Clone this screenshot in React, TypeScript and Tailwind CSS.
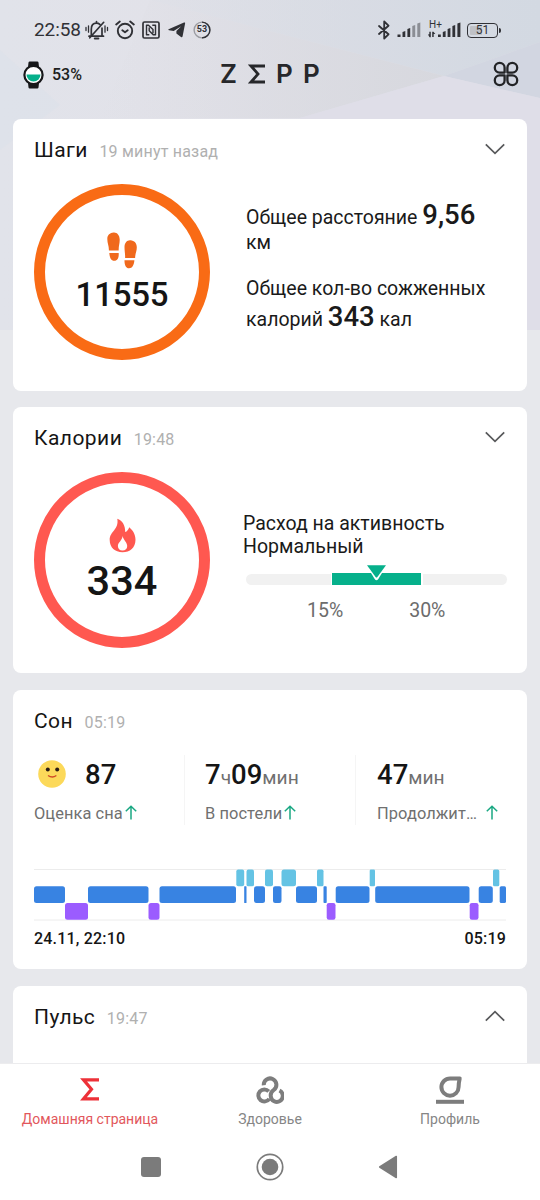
import type { ReactNode } from 'react';

type Stage = 'awake' | 'light' | 'deep';

// [stage, start, end] along the 472 unit wide night
const sleepStages: [Stage, number, number][] = [
    ['light', 0, 31],
    ['deep', 31, 54],
    ['light', 54, 114.5],
    ['deep', 114.5, 125.5],
    ['light', 125.5, 202],
    ['awake', 202.3, 210.2],
    ['light', 210.2, 212.5],
    ['awake', 212.5, 220],
    ['light', 220, 231],
    ['awake', 231, 239],
    ['light', 239, 247.5],
    ['awake', 247.5, 262],
    ['light', 262, 283],
    ['awake', 283, 289.5],
    ['light', 289.5, 292.7],
    ['deep', 292.7, 301.5],
    ['light', 301.7, 335.5],
    ['awake', 335.7, 341],
    ['light', 341.2, 435.5],
    ['deep', 435.7, 444.5],
    ['light', 444.7, 458.8],
    ['awake', 459, 465.3],
    ['light', 465.7, 472],
];

const stageColor = { awake: '#64c3e4', light: '#3883e2', deep: '#9b5cff' };
const stageTop = { awake: 0.5, light: 17.2, deep: 34 };

function StatusBar() {
    return (
        <div className="flex items-center h-[60px] pl-[34px] text-[#303136]">
            <span className="w-[51px] text-[19px] tracking-[-0.1px]">22:58</span>
            {/* Muted bell */}
            <svg width="24" height="20" viewBox="0 0 24 20" fill="none" stroke="currentColor" strokeWidth="1.7" strokeLinecap="round">
                <path d="M4 16.2h14.5M6.3 15.5V9.2c0-3.6 2-6 5.2-6 1.3 0 2.4.4 3.3 1.2M17 8.2v7.3M11.5 3V1.5M18.7 2.3 4.8 17.8" />
                <path d="M9.8 18.6h3.6" strokeWidth="2" />
                <path d="M1 7.5v3M3.5 5.8v6.4M22.5 7.5v3M20 5.8v6.4" strokeWidth="1.3" />
            </svg>
            {/* Alarm */}
            <svg className="ml-[6px]" width="20" height="20" viewBox="0 0 20 20" fill="none" stroke="currentColor" strokeWidth="1.9" strokeLinecap="round" strokeLinejoin="round">
                <circle cx="10" cy="11" r="7.2" />
                <path d="M1.2 4.5 4.8 1.5M18.8 4.5 15.2 1.5" />
                <path d="m7.3 10.2 2.7 2 2.7-2" />
            </svg>
            {/* NFC */}
            <svg className="ml-[7px]" width="18" height="18" viewBox="0 0 18 18" fill="none" stroke="currentColor" strokeWidth="1.7" strokeLinejoin="round">
                <rect x="1" y="1" width="16" height="16" rx="1.5" />
                <path d="M7.3 13.8H4.5V4.3h2l4.5 4.2v3.8M10.300 4.300h3.200v9.500h-2.300L7.200 9.800V6.500" strokeWidth="1.4" />
            </svg>
            {/* Telegram */}
            <svg className="ml-[8px]" width="18" height="16" viewBox="0 0 18 16" fill="currentColor">
                <path d="M.6 7.2 16 .5c.8-.3 1.3.1 1.1 1l-2.5 12.8c-.2.9-.9 1.1-1.6.6l-4.6-3.4V8.9l4.8-4.7-7.5 4.9L1 8.3c-.8-.3-.9-.8-.4-1.1Z" />
            </svg>
            {/* Power saver circle */}
            <div className="relative ml-[7px] size-[18px]">
                <svg width="18" height="18" viewBox="0 0 18 18" fill="none" strokeWidth="1.4">
                    <circle cx="9" cy="9" r="7.9" stroke="#9b9ca2" />
                    <path d="M9 1.1a7.9 7.9 0 0 1 0 15.8" stroke="#303136" />
                </svg>
                <span className="absolute inset-0 flex items-center justify-center text-[9px] font-bold">53</span>
            </div>

            {/* Bluetooth */}
            <svg className="ml-[167px]" width="12" height="20" viewBox="0 0 12 20" fill="none" stroke="currentColor" strokeWidth="1.8" strokeLinejoin="round" strokeLinecap="round">
                <path d="m1 6 9.5 8.3-4.3 4.2v-17l4.3 4.2L1 14" />
            </svg>
            <svg className="ml-[7px]" width="24" height="16" viewBox="0 0 24 16" fill="currentColor">
                <path d="M.5 12.5h3V15h-3ZM5.5 10l2.8-1v6H5.500ZM10.4 7l2.8-1v9h-2.8Z" />
                <path d="m15.3 4 2.9-1v12h-2.9ZM20.3 1.5l3-1V15h-3Z" opacity=".45" />
            </svg>
            <div className="relative ml-[7px] w-[33px] h-[20px]">
                <span className="absolute left-[1px] top-0 text-[10px] leading-[10px]">H+</span>
                <svg className="absolute left-0 top-[2px]" width="33" height="16" viewBox="0 0 33 16" fill="currentColor">
                    <path d="m0 12.5 1.3-.3V9.8h1.5v5.4H1.500ZM4.2 9.8h1.300L7.300 12H5.700v3H4.200ZM10 12.500h2.800V15H10ZM14.800 10l2.800-1v6h-2.800ZM19.600 7l2.800-1v9h-2.800ZM24.400 4l2.800-1v12h-2.800ZM29.400 1.500l3-1V15h-3Z" />
                </svg>
            </div>
            {/* Battery */}
            <div className="ml-[6px] flex items-center">
                <div className="w-[31px] h-[15px] rounded-[4px] border-[1.5px] border-[#303136] p-[2px]">
                    <div className="h-full flex items-center justify-center bg-linear-to-r from-[#bfc1c6] from-50% to-transparent to-50% rounded-[1px] text-[12px] leading-none">51</div>
                </div>
                <div className="ml-[1px] w-[2px] h-[5px] rounded-r-sm bg-[#303136]"></div>
            </div>
        </div>
    );
}

function Header() {
    return (
        <div className="flex items-center h-[30px] pl-[23px]">
            <svg className="-mt-[1px]" width="21" height="28" viewBox="0 0 21 28">
                <path d="M5.5 1.5Q5.7.5 6.7.5h7.6q1 0 1.2 1L16 6H5ZM5.500 26.500q.2 1 1.200 1h7.600q1 0 1.200-1L16 22H5Z" fill="#17181a" />
                <circle cx="10.5" cy="14" r="9.1" fill="#fff" stroke="#17181a" strokeWidth="2.2" />
                <path d="M3.5 13.500h14a7 7 0 0 1-14 0Z" fill="#06b08b" />
            </svg>
            <span className="ml-[8px] w-[168px] text-[16px] font-medium text-[#1d1e20]">53%</span>
            <div className="flex w-[103px] -mt-[2px] font-['Inter'] text-[26px] leading-[30px] font-semibold text-[#26272a]">
                <span className="w-[28px]">Z</span>
                <svg className="mt-[5px] mr-[10px]" width="18" height="20" viewBox="0 0 18 20" fill="none" stroke="currentColor" strokeWidth="2.8">
                    <path d="M17 2H3L10 10l-7 8H17" />
                </svg>
                <span className="w-[27px]">P</span>
                <span>P</span>
            </div>
            {/* Four petals */}
            <svg className="ml-[170px] -mt-[2px]" width="26" height="26" viewBox="0 0 26 26" fill="none" stroke="#222326" strokeWidth="2.3" strokeLinejoin="round">
                <path d="M11.6 11.6H6.7a4.9 4.9 0 1 1 4.900-4.900ZM14.400 11.600h4.900a4.900 4.900 0 1 0-4.900-4.900ZM11.600 14.400H6.700a4.900 4.900 0 1 0 4.900 4.900ZM14.400 14.400h4.900a4.900 4.900 0 1 1-4.900 4.900Z" />
            </svg>
        </div>
    );
}

function Chevron({ up = false }: { up?: boolean }) {
    return (
        <svg className={up ? 'rotate-180' : '-mt-[1px]'} width="20" height="12" viewBox="0 0 20 12" fill="none" stroke="#58595b" strokeWidth="1.7">
            <path d="m.8 1.300 9.200 9 9.200-9" />
        </svg>
    );
}

function CardTitle({ title, time, children }: { title: string; time: string; children?: ReactNode }) {
    return (
        <div className="flex items-center justify-between h-[24px]">
            <div className="flex items-baseline gap-[11.5px] pt-[3px]">
                <h2 className="text-[21px] leading-[24px] tracking-[0.45px] text-[#151515]">{title}</h2>
                <span className="text-[16px] leading-[24px] tracking-[0.2px] text-[#b0b0b0]">{time}</span>
            </div>
            {children}
        </div>
    );
}

function StepsCard() {
    return (
        <section className="h-[272px] rounded-[8px] bg-white pt-[18px] pl-[21px] pr-[22px]">
            <CardTitle title="Шаги" time="19 минут назад"><Chevron /></CardTitle>
            <div className="flex mt-[23px]">
                <div className="flex flex-col items-center size-[176px] rounded-full border-[11px] border-[#f96b15] pt-[37px]">
                    <svg width="30" height="37" viewBox="0 0 30 37" fill="#f0691c">
                        <path d="M6.500.5C10 .2 12.600 3 12.700 7.500c.1 4-1.200 6.500-1 11H1.900C2 13.500.3 11.500.3 7 .3 3 3 .8 6.500.5ZM2.300 21h9.400c.3 4.500-1 7.800-4.400 7.800-3.300 0-4.600-3-5-7.800ZM23.500 8.300c-3.500-.3-6 2.500-6 7 0 4 .8 6.500.6 10.700h10c0-4 1.700-6.500 1.700-10.700 0-4-2.500-6.700-6.300-7ZM17.500 28.300h9.900c-.4 4.500-2 8-5.300 8s-4.700-3.300-4.600-8Z" />
                    </svg>
                    <div className="mt-[6px] text-[33px] leading-[40px] tracking-[-0.2px] font-medium text-[#151515]">11555</div>
                </div>
                <div className="ml-[36px] text-[19.5px] leading-[24px] text-[#1a1a1a]">
                    <p className="mt-[17px] h-[52px] whitespace-nowrap">
                        <span className="block leading-[28px]">Общее расстояние <b className="text-[27.5px] font-medium">9,56</b></span>
                        <span className="block -mt-px">км</span>
                    </p>
                    <p className="mt-[24px] whitespace-nowrap">
                        <span className="block">Общее кол-во сожженных</span>
                        <span className="block leading-[31px]">калорий <b className="text-[27.5px] font-medium">343</b> кал</span>
                    </p>
                </div>
            </div>
        </section>
    );
}

function CaloriesCard() {
    return (
        <section className="h-[266px] rounded-[8px] bg-white pt-[18px] pl-[21px] pr-[20px]">
            <div className="pr-[2px]">
                <CardTitle title="Калории" time="19:48"><Chevron /></CardTitle>
            </div>
            <div className="flex mt-[23px]">
                <div className="flex flex-col items-center size-[176px] shrink-0 rounded-full border-[11px] border-[#ff5850] pt-[35px]">
                    <svg width="27" height="35" viewBox="0 0 27 35">
                        <path d="M8.300.8C13 2.500 16.400 7 16.200 14c1.900-.5 3.200-2.500 4-4.800 3.600 3 6.300 7 6.300 12.500 0 8-5.500 12.500-13 12.500S.7 29.500.7 22C.7 13 10.200 12 8.300.8Z" fill="#ff5850" />
                        <path d="M13.600 18c.8 4 4.600 6.500 4.600 10 0 2.800-1.800 4.600-4.700 4.600S8.900 30.700 8.900 28c0-4 4.200-5 4.700-10Z" fill="#fff" />
                    </svg>
                    <div className="mt-[6px] text-[41.5px] leading-[44px] font-medium text-[#151515]">334</div>
                </div>
                <div className="ml-[33px] flex-1 pt-[40px]">
                    <p className="text-[19.5px] leading-[23px] text-[#1a1a1a]">Расход на активность<br />Нормальный</p>
                    <div className="relative flex items-center gap-[1px] mt-[15px] ml-[3px] h-[12px]">
                        <div className="w-[85px] h-[11px] rounded-l-full bg-[#f1f1f1]"></div>
                        <div className="w-[89px] h-[12px] bg-[#06b08b]"></div>
                        <div className="ml-[1px] flex-1 h-[11px] rounded-r-full bg-[#f1f1f1]"></div>
                        <svg className="absolute left-[118px] top-[-9px]" width="24" height="18" viewBox="0 0 24 18">
                            <path d="M1.500 0h22L14.300 15q-1.800 2.500-3.600 0Z" fill="#fff" />
                            <path d="M3 1.200h19L13.400 13q-.9 1-1.800 0Z" fill="#06b08b" />
                        </svg>
                    </div>
                    <div className="flex gap-[66px] pl-[64px] mt-[14px] text-[19.5px] leading-[24px] text-[#6c6c6c]">
                        <span>15%</span>
                        <span>30%</span>
                    </div>
                </div>
            </div>
        </section>
    );
}

function ArrowUp() {
    return (
        <svg className="-mt-[4px]" width="12" height="15" viewBox="0 0 12 15" fill="none" stroke="#1aa883" strokeWidth="1.5">
            <path d="M6 14.500V1.500M.8 6.200 6 1.200l5.200 5" />
        </svg>
    );
}

function SleepCard() {
    return (
        <section className="h-[279px] rounded-[8px] bg-white pt-[18px] px-[21px]">
            <CardTitle title="Сон" time="05:19" />
            <div className="flex mt-[23px] h-[70px] text-[#707070]">
                <div className="w-[151px] border-r border-[#f5f5f5]">
                    <div className="flex items-center h-[40px]">
                        <svg className="ml-[4px] -mt-[2px]" width="28" height="28" viewBox="0 0 28 28">
                            <circle cx="14" cy="14" r="13.8" fill="#fcd95a" />
                            <circle cx="9.8" cy="9.5" r="2" fill="#2b1c14" />
                            <circle cx="19.2" cy="9.5" r="2" fill="#2b1c14" />
                            <path d="M10 15.500q4.200 3 8.400 0" fill="none" stroke="#cf4a26" strokeWidth="1.4" />
                        </svg>
                        <b className="ml-[19px] text-[27.5px] font-medium text-[#151515]">87</b>
                    </div>
                    <div className="flex items-center h-[30px] pt-[9px] gap-[2px]">
                        <span className="text-[16.4px] tracking-[0.08px]">Оценка сна</span>
                        <ArrowUp />
                    </div>
                </div>
                <div className="w-[171px] pl-[20px] border-r border-[#f5f5f5]">
                    <div className="h-[40px] leading-[40px] text-[19.2px] whitespace-nowrap">
                        <b className="text-[27.5px] font-medium text-[#151515]">7</b>ч<b className="text-[27.5px] font-medium text-[#151515]">09</b>мин
                    </div>
                    <div className="flex items-center h-[30px] pt-[9px] gap-[2px]">
                        <span className="text-[16.4px] tracking-[0.08px]">В постели</span>
                        <ArrowUp />
                    </div>
                </div>
                <div className="w-[144px] pl-[21px]">
                    <div className="h-[40px] leading-[40px] text-[19.2px] whitespace-nowrap">
                        <b className="text-[27.5px] font-medium text-[#151515]">47</b>мин
                    </div>
                    <div className="flex items-center h-[30px] pt-[9px]">
                        <span className="w-[109px] text-[16.4px] tracking-[0.08px] whitespace-nowrap">Продолжит…</span>
                        <ArrowUp />
                    </div>
                </div>
            </div>
            {/* Hypnogram */}
            <svg className="mt-[44px]" width="472" height="52" viewBox="0 0 472 52">
                <path d="M0 .5h472M0 51h472" stroke="#ececec" />
                {sleepStages.map(([stage, start, end]) => (
                    <rect
                        key={start}
                        x={start}
                        y={stageTop[stage]}
                        width={end - start}
                        height="16.8"
                        rx={Math.min(2.5, (end - start) / 4)}
                        fill={stageColor[stage]}
                    />
                ))}
            </svg>
            <div className="flex justify-between mt-[6px] text-[16px] tracking-[0.2px] leading-[24px] font-medium text-[#151515]">
                <span>24.11, 22:10</span>
                <span>05:19</span>
            </div>
        </section>
    );
}

function PulseCard() {
    return (
        <section className="h-[120px] rounded-[8px] bg-white pt-[18px] pl-[21px] pr-[22px]">
            <CardTitle title="Пульс" time="19:47"><Chevron up /></CardTitle>
        </section>
    );
}

function NavItem({ label, active = false, children }: { label: string; active?: boolean; children: ReactNode }) {
    return (
        <div className={`flex flex-col items-center flex-1 ${active ? 'text-[#e2575c]' : 'text-[#868686]'}`}>
            <div className="h-[30px]">{children}</div>
            <span className="mt-[3px] text-[14px] leading-[20px] whitespace-nowrap">{label}</span>
        </div>
    );
}

function BottomNav() {
    return (
        <nav className="relative h-[137px] shrink-0 border-t border-[#ececee] bg-white">
            <div className="flex pt-[12px]">
                <NavItem label="Домашняя страница" active>
                    <svg width="28" height="28" viewBox="0 0 28 28" fill="none" stroke="#ed3138" strokeWidth="3.2">
                        <path d="M23 3.800H7.500L15.500 13.300l-8 9.500H23" />
                    </svg>
                </NavItem>
                <NavItem label="Здоровье">
                    <svg width="28" height="28" viewBox="0 0 28 28" fill="none" stroke="#7d7d7d" strokeWidth="4">
                        <path d="M7.800 9.300a6.300 6.300 0 1 1 10 4.500c-2.500 1.700-3.500 3.500-3 6.500a6 6 0 1 0 8.700-5.800" />
                        <path d="M12.700 15.300a6 6 0 1 0 .6 7.500" />
                    </svg>
                </NavItem>
                <NavItem label="Профиль">
                    <svg width="28" height="28" viewBox="0 0 28 28" fill="none" stroke="#7d7d7d" strokeWidth="4">
                        <path d="M23.700 2.500H14a8.600 8.600 0 1 0 8.600 8.600q0-4 1.100-8.600Z" strokeLinejoin="round" />
                        <path d="M0 25.800h28" />
                    </svg>
                </NavItem>
            </div>
            {/* System buttons */}
            <div className="flex items-center mt-[24px] pl-[141px]">
                <div className="size-[20px] rounded-[3px] bg-[#7b7b7b]"></div>
                <svg className="ml-[95px]" width="28" height="28" viewBox="0 0 28 28">
                    <circle cx="14" cy="14" r="12.7" fill="none" stroke="#7b7b7b" strokeWidth="1.7" />
                    <circle cx="14" cy="14" r="8.3" fill="#7b7b7b" />
                </svg>
                <svg className="ml-[94px]" width="20" height="24" viewBox="0 0 20 24">
                    <path d="M18.300 1.500v21L1.700 12Z" fill="#7b7b7b" stroke="#7b7b7b" strokeWidth="1.5" strokeLinejoin="round" />
                </svg>
            </div>
        </nav>
    );
}

// Soft facets behind the top of the page
function Backdrop() {
    return (
        <svg className="absolute left-0 top-0" width="540" height="330" viewBox="0 0 540 330">
            <defs>
                <linearGradient id="base" x1="0" y1="0" x2="1" y2="0">
                    <stop offset="0" stopColor="#e1e3ea" />
                    <stop offset=".3" stopColor="#e2e2e9" />
                    <stop offset="1" stopColor="#dcdde5" />
                </linearGradient>
                <linearGradient id="sky" x1="0" y1="0" x2="1" y2="0">
                    <stop offset="0" stopColor="#d5dae2" stopOpacity="0" />
                    <stop offset="1" stopColor="#d3d9e2" />
                </linearGradient>
                <linearGradient id="facet" x1="0" y1="0" x2="1" y2="0">
                    <stop offset="0" stopColor="#dadae0" stopOpacity="0" />
                    <stop offset="1" stopColor="#d7d8de" />
                </linearGradient>
            </defs>
            <rect width="540" height="330" fill="url(#base)" />
            <path d="M0 50 60 105 0 150Z" fill="#dce1e9" opacity=".6" />
            <path d="M60 0h480v42l-96 34L150 0Z" fill="url(#sky)" />
            <path d="M150 0 444 76 300 118H100Z" fill="url(#facet)" />
            <path d="M540 42v56l-96-22Z" fill="#d2d6e1" />
            <path d="m444 76 96 22v232H300V118Z" fill="#dfdee8" />
        </svg>
    );
}

export default function App() {
    return (
        <div className="relative flex flex-col w-[540px] h-[1200px] overflow-hidden bg-[#e7e8ec] font-['Roboto',sans-serif]">
            <Backdrop />
            <div className="relative flex-1 min-h-0 overflow-hidden">
                <StatusBar />
                <Header />
                <main className="flex flex-col px-[13px] pt-[29px]">
                    <StepsCard />
                    <div className="h-[16px]"></div>
                    <CaloriesCard />
                    <div className="h-[17px]"></div>
                    <SleepCard />
                    <div className="h-[17px]"></div>
                    <PulseCard />
                </main>
            </div>
            <BottomNav />
        </div>
    );
}
